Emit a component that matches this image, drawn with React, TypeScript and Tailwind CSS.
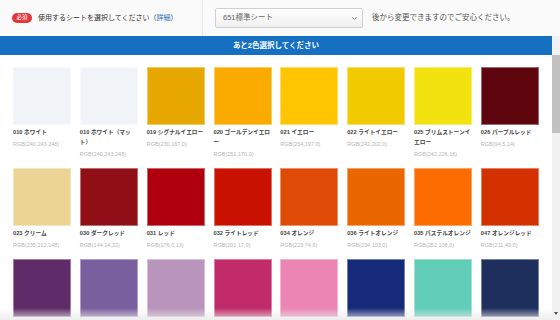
import React from "react";
import { ChevronDown } from "lucide-react";

type Swatch = { code: string; name: string; rgb: [number, number, number] };

const swatches: Swatch[] = [
  { code: "010", name: "ホワイト", rgb: [240, 243, 248] },
  { code: "010", name: "ホワイト（マット）", rgb: [240, 243, 248] },
  { code: "019", name: "シグナルイエロー", rgb: [230, 167, 0] },
  { code: "020", name: "ゴールデンイエロー", rgb: [251, 170, 0] },
  { code: "021", name: "イエロー", rgb: [254, 197, 0] },
  { code: "022", name: "ライトイエロー", rgb: [242, 202, 0] },
  { code: "025", name: "ブリムストーンイエロー", rgb: [242, 226, 16] },
  { code: "026", name: "パープルレッド", rgb: [94, 5, 14] },
  { code: "023", name: "クリーム", rgb: [235, 212, 148] },
  { code: "030", name: "ダークレッド", rgb: [144, 14, 22] },
  { code: "031", name: "レッド", rgb: [176, 0, 13] },
  { code: "032", name: "ライトレッド", rgb: [201, 17, 0] },
  { code: "034", name: "オレンジ", rgb: [223, 74, 6] },
  { code: "036", name: "ライトオレンジ", rgb: [234, 103, 0] },
  { code: "035", name: "パステルオレンジ", rgb: [252, 108, 0] },
  { code: "047", name: "オレンジレッド", rgb: [211, 49, 0] },
  { code: "040", name: "ヴァイオレット", rgb: [95, 43, 104] },
  { code: "043", name: "ラベンダー", rgb: [122, 95, 158] },
  { code: "042", name: "ライラック", rgb: [185, 148, 187] },
  { code: "041", name: "ピンク", rgb: [193, 43, 105] },
  { code: "045", name: "ソフトピンク", rgb: [236, 133, 180] },
  { code: "049", name: "キングブルー", rgb: [21, 42, 120] },
  { code: "054", name: "ミントグリーン", rgb: [98, 205, 183] },
  { code: "050", name: "ダークブルー", rgb: [30, 47, 94] },
];

const SwatchCard = ({ item }: { item: Swatch }) => {
  const [r, g, b] = item.rgb;
  return (
    <div className="flex flex-col">
      <div
        className="h-[58px] w-full shrink-0 border border-white/40"
        style={{ backgroundColor: `rgb(${r},${g},${b})` }}
      ></div>
      <div className="mt-[2px] text-[5.7px] font-bold leading-[10px] text-[#444]">
        {item.code} {item.name}
      </div>
      <div className="mt-[2px] text-[5.5px] leading-[10px] text-[#b5b5b5]">
        RGB({r},{g},{b})
      </div>
    </div>
  );
};

export default function App() {
  return (
    <div className="flex h-[320px] w-[560px] flex-col overflow-hidden bg-white font-['Liberation_Sans','Noto_Sans_CJK_JP',sans-serif]">
      <div className="flex h-[36px] shrink-0 items-center bg-[#fafafa]">
        <div className="flex h-full w-[203px] items-center border-r border-[#e8e8e8] pl-[12px]">
          <span className="flex h-[10px] w-[20px] items-center justify-center rounded-full bg-[#e2363b] text-[5.5px] leading-none text-white">
            必須
          </span>
          <span className="ml-[6px] text-[7px] text-[#333]">
            使用するシートを選択してください（<span className="text-[#1a6fc0]">詳細</span>）
          </span>
        </div>
        <div className="ml-[12px] flex h-[20px] w-[148px] items-center justify-between rounded-[2px] border border-[#d0d0d0] bg-gradient-to-b from-white to-[#f0f0f0] pl-[7px] pr-[4px]">
          <span className="text-[7.5px] text-[#666]">651標準シート</span>
          <ChevronDown size={7} strokeWidth={3} className="text-[#666]" />
        </div>
        <span className="ml-[9px] text-[7.5px] text-[#555]">
          後から変更できますのでご安心ください。
        </span>
      </div>

      <div className="flex min-h-0 flex-1">
        <div className="relative flex min-w-0 flex-1 flex-col overflow-hidden">
          <div className="relative flex h-[19px] shrink-0 items-center justify-center bg-[#1570c1]">
            <div className="absolute -top-[4px] left-[271px] h-0 w-0 border-x-[5px] border-b-[4px] border-x-transparent border-b-[#1570c1]"></div>
            <span className="text-[7.5px] font-bold text-white">あと2色選択してください</span>
          </div>
          <div className="grid shrink-0 grid-cols-8 gap-x-[8.7px] gap-y-[9px] px-[13px] pt-[12px]">
            {swatches.map((item, idx) => (
              <SwatchCard key={idx} item={item} />
            ))}
          </div>
          <div className="pointer-events-none absolute bottom-0 left-0 right-0 h-[12px] bg-gradient-to-b from-white/0 to-[#e9e9e9]/80"></div>
        </div>
        <div className="flex w-[8px] flex-col bg-[#f1f1f1]">
          <div className="h-[19px]"></div>
          <div className="h-[78px] bg-[#c1c1c1]"></div>
          <div className="flex-1"></div>
          <div className="mb-[5px] flex justify-center">
            <div className="h-0 w-0 border-x-[2.5px] border-t-[3px] border-x-transparent border-t-[#505050]"></div>
          </div>
        </div>
      </div>
    </div>
  );
}
